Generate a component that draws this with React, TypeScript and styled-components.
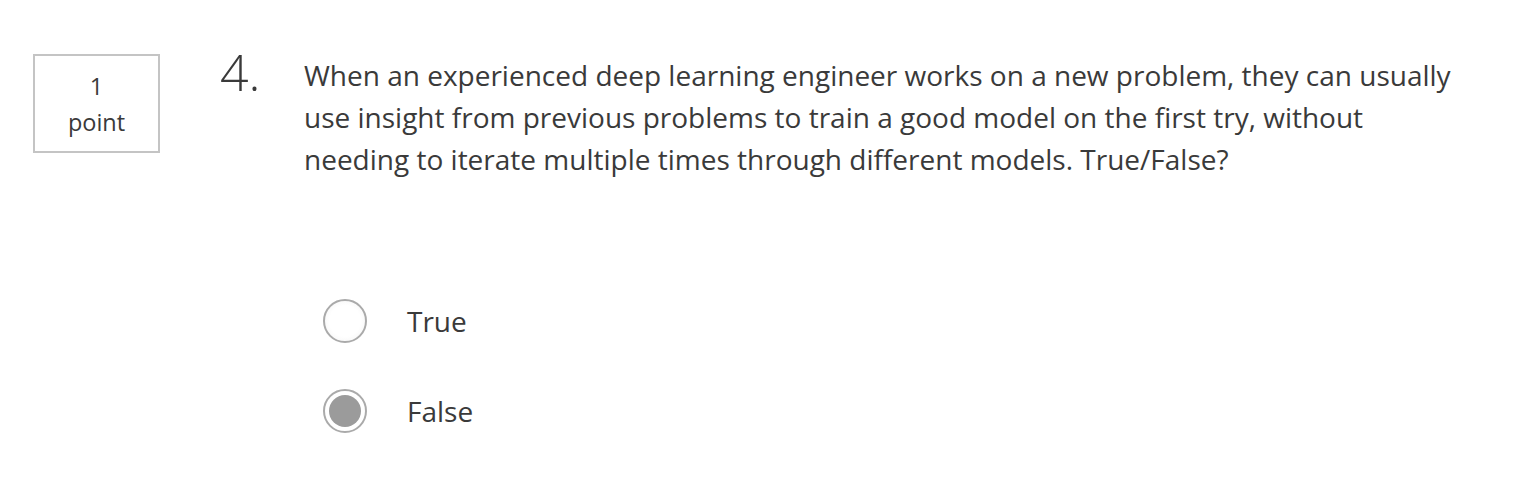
import React from "react";
import styled, { createGlobalStyle } from "styled-components";

const Global = createGlobalStyle`
  html, body { margin: 0; padding: 0; background: #fff; }
  body { font-family: "Open Sans", "Liberation Sans", sans-serif; color: #3a3a3a; }
`;

const Page = styled.div`
  display: flex;
  align-items: flex-start;
  padding: 54px 0 0 33px;
`;

const PointBox = styled.div`
  box-sizing: border-box;
  width: 127px;
  height: 99px;
  border: 2px solid #c4c4c4;
  display: flex;
  flex-direction: column;
  align-items: center;
  justify-content: center;
  font-size: 23.5px;
  line-height: 36px;
  color: #3a3a3a;
  padding-top: 1px;
`;

const Number = styled.div`
  margin-left: 60px;
  width: 84px;
  font-size: 50px;
  font-weight: 300;
  line-height: 36px;
  color: #3a3a3a;
`;

const Body = styled.div`
  display: flex;
  flex-direction: column;
`;

const Question = styled.p`
  margin: 0;
  width: 1162px;
  font-size: 28px;
  line-height: 42px;
  color: #3a3a3a;
`;

const Options = styled.div`
  display: flex;
  flex-direction: column;
  gap: 46px;
  margin-top: 119px;
  margin-left: 19px;
`;

const Option = styled.label`
  display: flex;
  align-items: center;
  gap: 40px;
  font-size: 28px;
  color: #3a3a3a;
`;

const Radio = styled.span<{ $checked?: boolean }>`
  box-sizing: border-box;
  width: 44px;
  height: 44px;
  border-radius: 50%;
  border: 2px solid #aaaaaa;
  background: ${(p) => (p.$checked ? "#fff" : "radial-gradient(circle, #ffffff 55%, #f0f0f0 100%)")};
  display: flex;
  align-items: center;
  justify-content: center;
  &::after {
    content: "";
    display: ${(p) => (p.$checked ? "block" : "none")};
    width: 32px;
    height: 32px;
    border-radius: 50%;
    background: #9b9b9b;
  }
`;

export default function App() {
  return (
    <>
      <Global />
      <Page>
        <PointBox>
          <span>1</span>
          <span>point</span>
        </PointBox>
        <Number>4.</Number>
        <Body>
          <Question>
            When an experienced deep learning engineer works on a new problem, they can usually use insight from previous problems to train a good model on the first try, without needing to iterate multiple times through different models. True/False?
          </Question>
          <Options>
            <Option>
              <Radio />
              True
            </Option>
            <Option>
              <Radio $checked />
              False
            </Option>
          </Options>
        </Body>
      </Page>
    </>
  );
}
